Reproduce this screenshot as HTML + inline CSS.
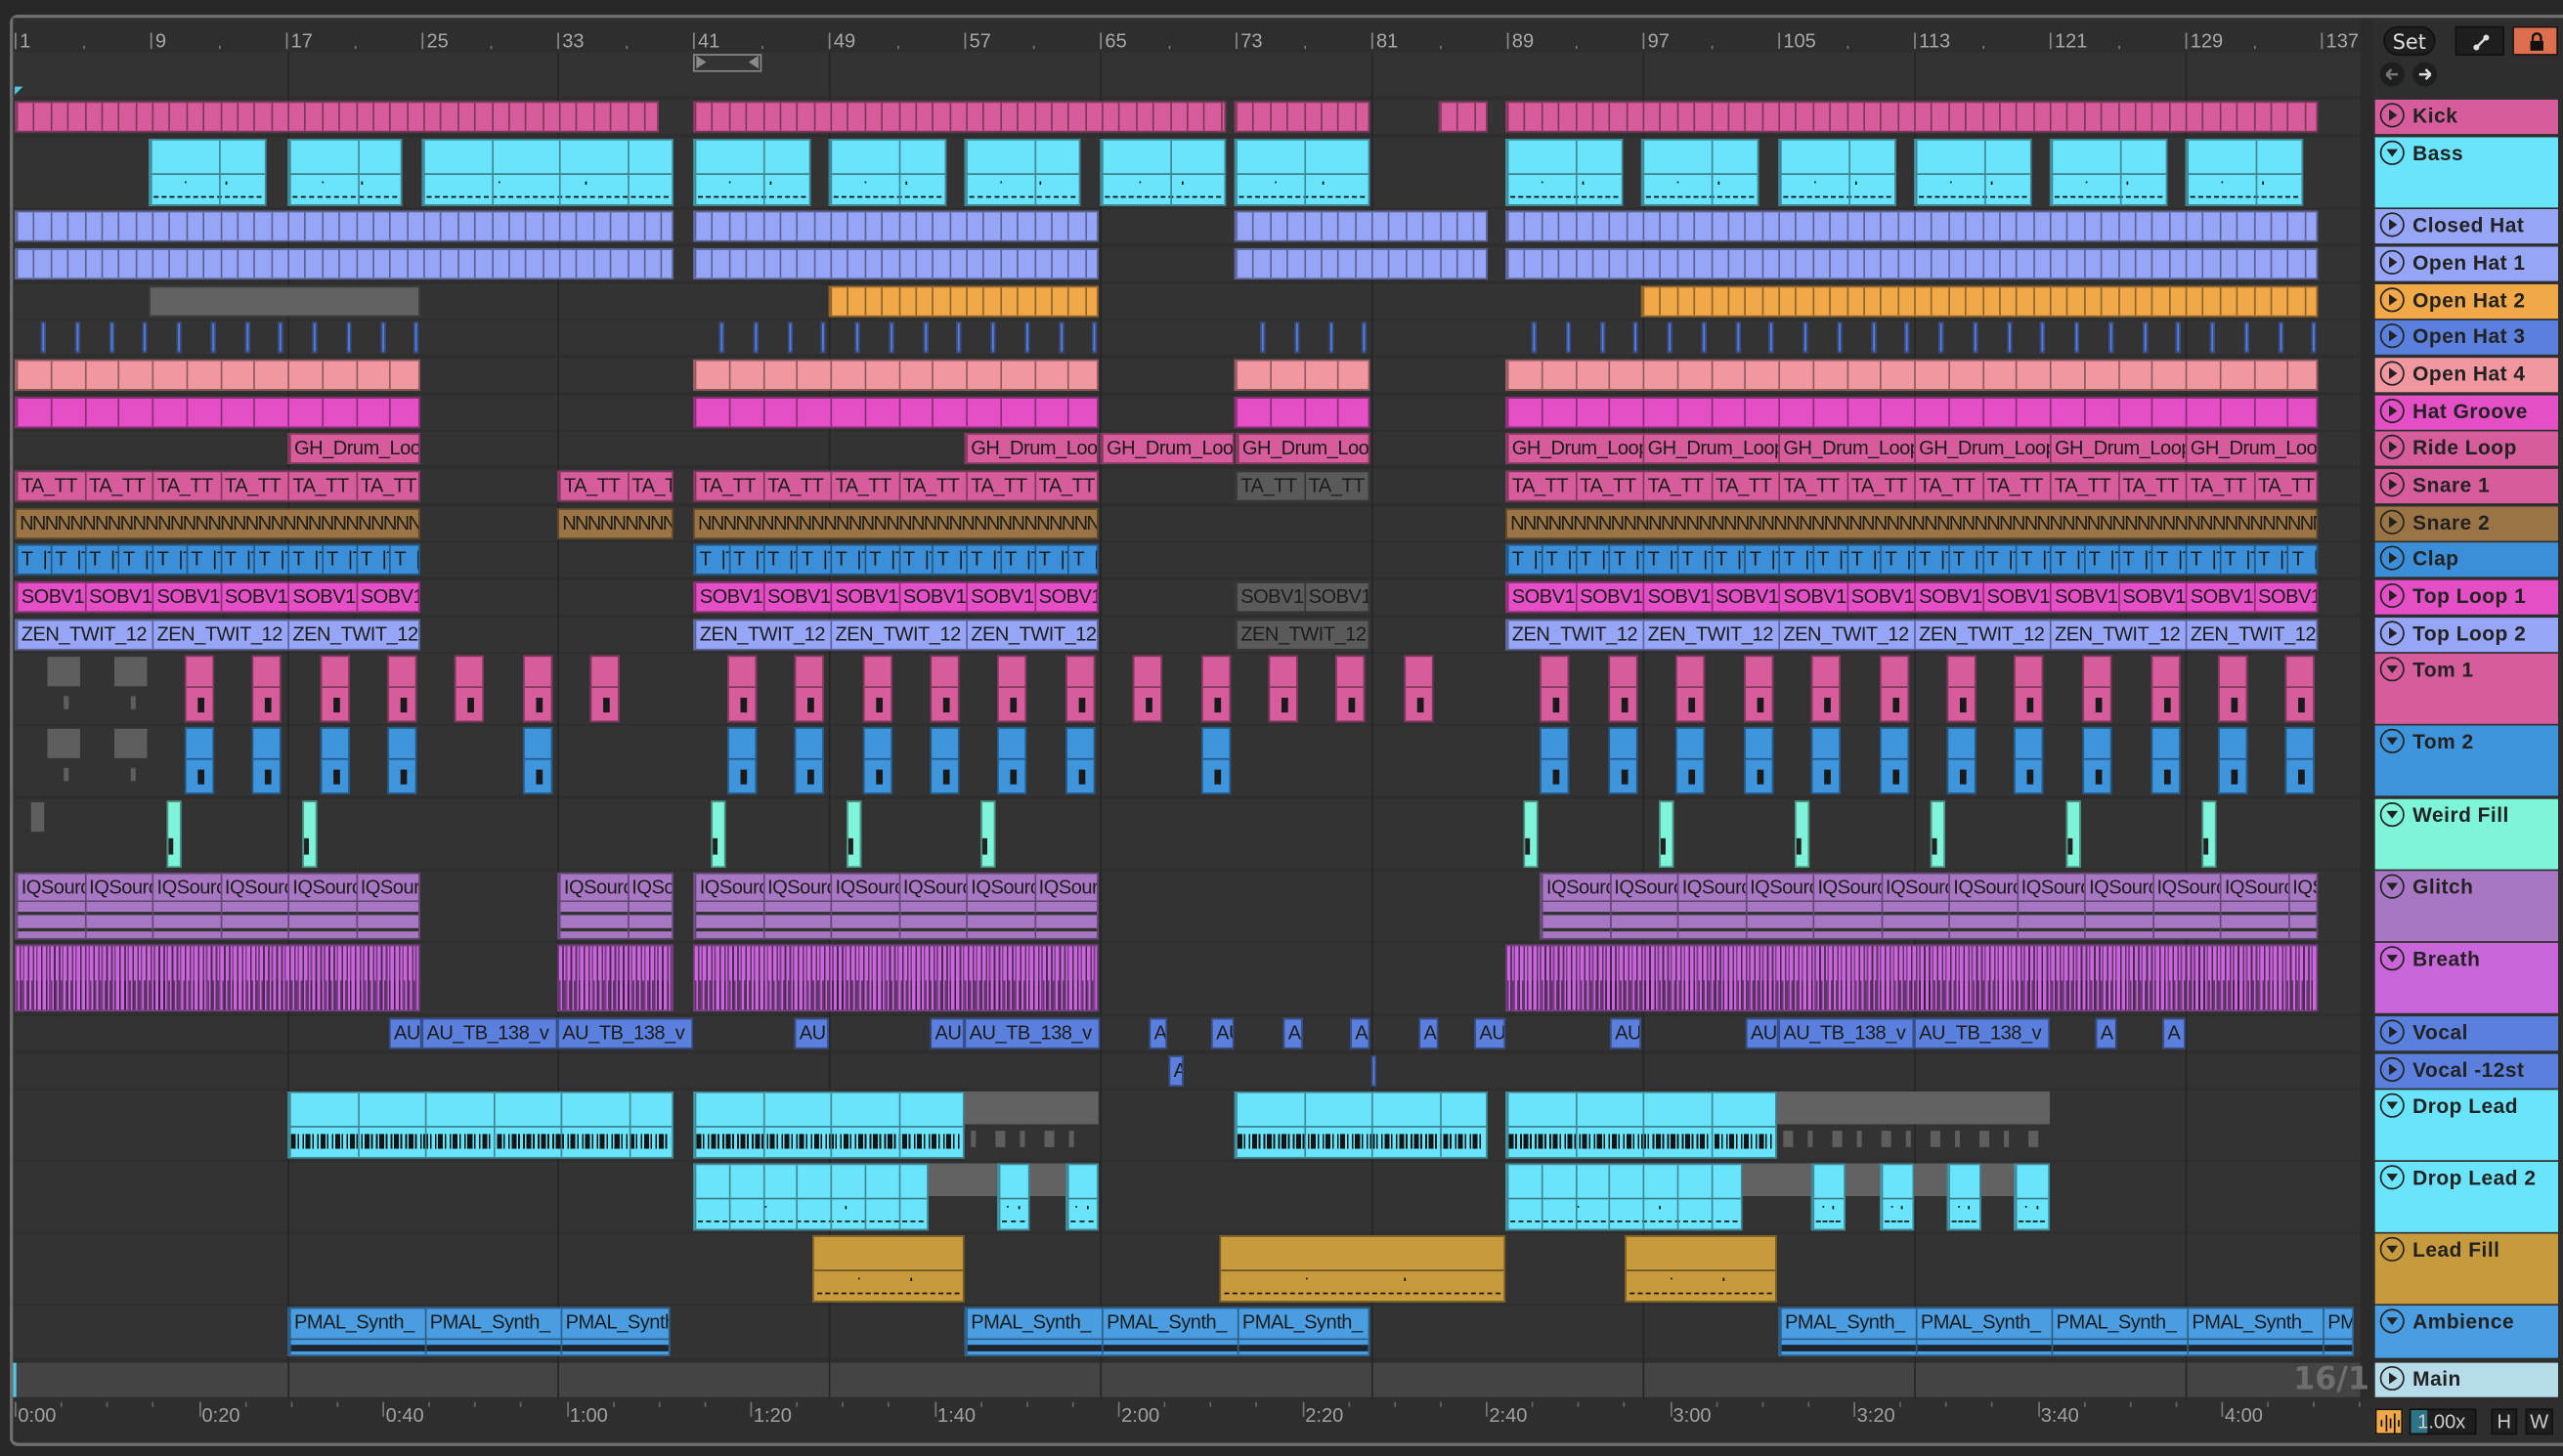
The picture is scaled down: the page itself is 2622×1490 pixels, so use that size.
<!DOCTYPE html>
<html><head><meta charset="utf-8">
<style>
html,body{margin:0;padding:0;background:#282828;overflow:hidden;width:2622px;height:1490px}
#s{position:absolute;left:0;top:0;width:1568px;height:891px;transform:scale(1.672194);transform-origin:0 0;font-family:"Liberation Sans",sans-serif;background:#282828}
.a{position:absolute;box-sizing:border-box}
.frame{left:6px;top:9px;width:1570px;height:876px;border:2px solid #6f6f6f;border-radius:5px;background:#2e2e2e}
.c{position:absolute;box-sizing:border-box;overflow:hidden}
.lbl{position:absolute;left:2px;top:1px;font-size:12px;color:#1c1c1c;white-space:nowrap;line-height:14px;letter-spacing:-0.3px}
.hd{position:absolute;left:1453px;width:112px;box-sizing:border-box;font-size:12px;font-weight:bold;color:#222;font-family:"Liberation Sans",sans-serif}
.hd .ic{position:absolute;left:3px;top:2px;width:15px;height:15px;border:1.3px solid #222;border-radius:50%;box-sizing:border-box}
.hd .tx{position:absolute;left:23px;top:3px;font-size:12.5px;letter-spacing:0.3px}
.rl{position:absolute;font-size:12px;color:#a8a8a8;top:18px}
.tl{position:absolute;font-size:12px;color:#a0a0a0;top:859px}
</style></head><body>
<div id="s">
<div class="a frame"></div>
<div id="g"></div>
</div>
<script>
var S=document.getElementById('g');
function el(st,html,cls){var d=document.createElement('div');d.className=cls||'a';d.style.cssText=st;if(html)d.innerHTML=html;S.appendChild(d);return d;}
el('left:8px;top:11px;width:1436px;height:21px;background:#2e2e2e');
el('left:8px;top:32px;width:1436px;height:27px;background:#333');
var bars=[1,9,17,25,33,41,49,57,65,73,81,89,97,105,113,121,129,137];
bars.forEach(function(b,i){var x=9+(b-1)*10.375;
 el('left:'+(x)+'px;top:20px;width:1px;height:10px;background:#888');
 el('left:'+(x+3)+'px;top:18px;font-size:12px;color:#a8a8a8;','' + b,'rl');
 el('left:'+(x+41.5)+'px;top:28px;width:1px;height:2px;background:#777');
});
el('left:424px;top:33px;width:42px;height:11px;border:1px solid #8a8a8a');
el('left:426px;top:34px;width:0;height:0;border-top:4px solid transparent;border-bottom:4px solid transparent;border-left:6px solid #8a8a8a');
el('left:458px;top:34px;width:0;height:0;border-top:4px solid transparent;border-bottom:4px solid transparent;border-right:6px solid #8a8a8a');
el('left:9px;top:53px;width:0;height:0;border-top:5px solid #4fc9e0;border-right:5px solid transparent');
var T=[
['Kick',61,21,'#d65c9b',0],['Bass',84,43,'#6ae4fb',1],['Closed Hat',128,21,'#97a5f7',0],['Open Hat 1',151,21,'#97a5f7',0],
['Open Hat 2',174,21,'#f0a848',0],['Open Hat 3',196,21,'#5b7fdc',0],['Open Hat 4',219,21,'#f0979f',0],['Hat Groove',242,21,'#e54fc6',0],
['Ride Loop',264,21,'#d65c9b',0],['Snare 1',287,21,'#d65c9b',0],['Snare 2',310,21,'#9a7444',0],['Clap',332,21,'#3b8fd8',0],
['Top Loop 1',355,21,'#e54fc6',0],['Top Loop 2',378,21,'#97a5f7',0],['Tom 1',400,43,'#d65c9b',1],['Tom 2',444,43,'#3e95dc',1],
['Weird Fill',489,43,'#7ef5d9',1],['Glitch',533,43,'#a877c3',1],['Breath',577,43,'#c966d9',1],['Vocal',622,21,'#5b7fdc',0],
['Vocal -12st',645,21,'#5b7fdc',0],['Drop Lead',667,43,'#6ae4fb',1],['Drop Lead 2',711,43,'#6ae4fb',1],['Lead Fill',755,43,'#c89a3e',1],
['Ambience',799,32,'#4a9de0',1],['Main',834,21,'#b5dce8',0]];
T.forEach(function(t,i){
 var bg=i==25?'#444':'#333';
 el('left:8px;top:'+t[1]+'px;width:1436px;height:'+t[2]+'px;background:'+bg);
 var h=el('top:'+t[1]+'px;height:'+t[2]+'px;background:'+t[3],'','hd');
 var icon=t[4]?'<svg width="13" height="13" viewBox="0 0 13 13" style="position:absolute;left:0;top:0"><path d="M3 4.3 L10 4.3 L6.5 9 Z" fill="#222"/></svg>':'<svg width="13" height="13" viewBox="0 0 13 13" style="position:absolute;left:0;top:0"><path d="M4.6 3 L9.6 6.5 L4.6 10 Z" fill="#222"/></svg>';
 h.innerHTML='<div class="ic">'+icon+'</div><div class="tx">'+t[0]+'</div>';
});
[176,341,507,673,839,1005,1171,1337].forEach(function(x){el('left:'+x+'px;top:32px;width:1px;height:824px;background:#262626');});
el('left:1444px;top:11px;width:8px;height:845px;background:#2b2b2b');
function dk(c,f){var n=parseInt(c.slice(1),16),r=(n>>16)*f|0,g=((n>>8)&255)*f|0,b=(n&255)*f|0;return 'rgb('+r+','+g+','+b+')';}
function clip(ti,x1,x2,col,div,label,kind){
 var t=T[ti];var y=t[1]+1,h=t[2]-2;
 var c=el('left:'+x1+'px;top:'+y+'px;width:'+(x2-x1)+'px;height:'+h+'px;background:'+col+';border:1px solid '+dk(col,0.6),'','c');
 if(kind=='midi'){c.innerHTML+='<div class="a" style="left:0;right:0;top:'+(h/2-1)+'px;height:1px;background:'+dk(col,0.55)+'"></div><div class="a" style="left:2px;right:2px;top:'+(h*0.83)+'px;height:1px;border-top:1.2px dashed #111"></div><div class="a" style="left:30%;top:'+(h*0.62)+'px;width:1px;height:1px;background:#111"></div><div class="a" style="left:65%;top:'+(h*0.6)+'px;width:1px;height:2px;background:#111"></div>';}
 if(kind=='bar'){c.innerHTML+='<div class="a" style="left:0;right:0;top:'+(h/2-1)+'px;height:1px;background:'+dk(col,0.55)+'"></div><div class="a" style="left:1px;right:1px;top:'+(h*0.6)+'px;height:'+(h*0.24)+'px;background:repeating-linear-gradient(90deg,#151515 0 3px,'+col+' 3px 4px,#151515 4px 5px,'+col+' 5px 7px,#151515 7px 8px,'+col+' 8px 9px)"></div>';}
 if(kind=='wave'){c.innerHTML+='<div class="a" style="left:0;right:0;top:'+(h*0.38)+'px;height:1px;background:'+dk(col,0.6)+'"></div><div class="a" style="left:0;right:0;top:'+(h*0.56)+'px;height:2px;background:#333"></div><div class="a" style="left:0;right:0;top:'+(h*0.8)+'px;height:2px;background:#333"></div>';}
 if(kind=='amb'){c.innerHTML+='<div class="a" style="left:0;right:0;top:'+(h*0.6)+'px;height:1px;background:'+dk(col,0.6)+'"></div><div class="a" style="left:0;right:0;top:'+(h*0.72)+'px;height:4px;background:#1b2630"></div>';}
 if(kind=='breath'){c.style.background='repeating-linear-gradient(90deg,'+col+' 0 2px,#5a3464 2px 3px,'+col+' 3px 4px,#7a3f88 4px 5px,'+col+' 5px 7px,#4a2a52 7px 8px)';c.innerHTML+='<div class="a" style="left:0;right:0;top:'+(h*0.5)+'px;height:'+(h*0.45)+'px;background:repeating-linear-gradient(90deg,rgba(40,20,45,.6) 0 1px,transparent 1px 3px)"></div>';}
 if(div){for(var x=0;x<x2-x1-0.5;x+=div){var d=document.createElement('div');d.className='a';d.style.cssText='left:'+x+'px;top:0;width:'+div+'px;height:100%;border-left:1px solid '+dk(col,0.6)+';overflow:hidden';if(label)d.innerHTML='<div class="lbl">'+label+'</div>';c.appendChild(d);}}
 else if(label){c.innerHTML+='<div class="lbl">'+label+'</div>';}
 return c;}
var B=10.375;
function R(ti,ranges,col,div,label,kind){ranges.forEach(function(r){clip(ti,r[0],r[1],col,div,label,kind);});}
var A=[[9,257],[424,672],[921,1418]];
R(0,[[9,403],[424,750],[755,838],[880,910],[921,1418]],'#d65c9b',B);
R(1,[[91,163],[176,246],[258,412],[424,496],[507,579],[590,661],[673,750],[755,838],[921,993],[1004,1076],[1088,1160],[1171,1243],[1254,1326],[1337,1409]],'#6ae4fb',B*4,'', 'midi');
R(2,[[9,412],[424,672],[755,910],[921,1418]],'#97a5f7',B);
R(3,[[9,412],[424,672],[755,910],[921,1418]],'#97a5f7',B);
clip(4,91,257,'#626262',0);R(4,[[507,672],[1004,1418]],'#f0a848',B);
[[9,257],[424,672],[755,838],[921,1418]].forEach(function(r){for(var x=r[0]+16;x<r[1];x+=B*2)clip(5,x,x+3,'#5b7fdc',0);});
R(6,[[9,257],[424,672],[755,838],[921,1418]],'#f0979f',B*2);
R(7,[[9,257],[424,672],[755,838],[921,1418]],'#e54fc6',B*2);
R(8,[[176,257],[590,672],[673,755],[756,838],[921,1418]],'#d65c9b',B*8,'GH_Drum_Loop');
R(9,[[9,257],[341,412],[424,672],[921,1418]],'#d65c9b',B*4,'TA_TT');clip(9,755,838,'#5a5a5a',B*4,'TA_TT');
R(10,[[9,257],[341,412],[424,672],[921,1418]],'#9a7444',0,'<span style="letter-spacing:-1px">NNNNNNNNNNNNNNNNNNNNNNNNNNNNNNNNNNNNNNNNNNNNNNNNNNNNNNNNNNNNNNNNNNNNNNNNNNNNNNNNNNNNNN</span>');
R(11,A,'#3b8fd8',B*2,'T&nbsp;&nbsp;|T');
R(12,A,'#e54fc6',B*4,'SOBV1');clip(12,755,838,'#5a5a5a',B*4,'SOBV1');
R(13,A,'#97a5f7',B*8,'ZEN_TWIT_12');clip(13,755,838,'#5a5a5a',B*8,'ZEN_TWIT_12');
function tom(ti,xs,col){xs.forEach(function(x){var c=clip(ti,x,x+18,col,0);c.innerHTML='<div class="a" style="left:7px;top:25px;width:4px;height:9px;background:#1a1a1a"></div><div class="a" style="left:0;right:0;top:18px;height:1px;background:'+dk(col,0.6)+'"></div>';});}
tom(14,[113,154,196,237,278,320,361,445,486,528,569,610,652,693,735,776,817,859,942,984,1025,1067,1108,1150,1191,1232,1274,1316,1357,1398],'#d65c9b');
tom(15,[113,154,196,237,320,445,486,528,569,610,652,735,942,984,1025,1067,1108,1150,1191,1232,1274,1316,1357,1398],'#3e95dc');
[[14],[15]].forEach(function(a){var t=T[a[0]];[29,70].forEach(function(x){el('left:'+x+'px;top:'+(t[1]+2)+'px;width:20px;height:18px;background:#5e5e5e');el('left:'+(x+10)+'px;top:'+(t[1]+26)+'px;width:3px;height:8px;background:#5e5e5e');});});
[102,185,435,518,600,932,1015,1098,1181,1264,1347].forEach(function(x){var c=clip(16,x,x+9,'#7ef5d9',0);c.innerHTML='<div class="a" style="left:0;top:22px;width:3px;height:10px;background:#222"></div>';});
el('left:19px;top:491px;width:8px;height:18px;background:#5e5e5e');
R(17,[[9,257],[341,412],[424,672],[942,1418]],'#a877c3',B*4,'IQSource','wave');
R(18,[[9,257],[341,412],[424,672],[921,1418]],'#c966d9',0,'','breath');
[[238,258,'AU'],[258,341,'AU_TB_138_v'],[341,424,'AU_TB_138_v'],[486,507,'AU'],[569,590,'AU'],[590,673,'AU_TB_138_v'],[703,714,'A'],[741,755,'AU'],[785,797,'A'],[826,838,'A'],[868,880,'A'],[902,921,'AU'],[985,1004,'AU'],[1068,1088,'AU'],[1088,1171,'AU_TB_138_v'],[1171,1254,'AU_TB_138_v'],[1282,1295,'A'],[1323,1337,'A']].forEach(function(v){clip(19,v[0],v[1],'#5b7fdc',0,v[2]);});
clip(20,715,724,'#5b7fdc',0,'A');clip(20,839,842,'#5b7fdc',0);
R(21,[[176,412],[424,590],[755,910],[921,1087]],'#6ae4fb',B*4,'','bar');
[[590,672],[1087,1254]].forEach(function(r){var t=T[21];el('left:'+r[0]+'px;top:'+(t[1]+1)+'px;width:'+(r[1]-r[0])+'px;height:20px;background:#626262');for(var x=r[0]+4;x<r[1]-8;x+=15)el('left:'+x+'px;top:'+(t[1]+25)+'px;width:'+(x%2?6:3)+'px;height:10px;background:#5e5e5e');});
R(22,[[424,568],[610,630],[652,672],[921,1066],[1108,1129],[1150,1171],[1191,1212],[1232,1254]],'#6ae4fb',B*2,'','midi');
[[568,610],[630,652],[1066,1108],[1129,1150],[1171,1191],[1212,1232]].forEach(function(r){el('left:'+r[0]+'px;top:712px;width:'+(r[1]-r[0])+'px;height:20px;background:#626262');});
R(23,[[497,590],[746,921],[994,1087]],'#c89a3e',0,'','midi');
R(24,[[176,410],[590,838],[1088,1440]],'#4a9de0',B*8,'PMAL_Synth_','amb');
el('left:1403px;top:833px;font-size:19px;font-weight:bold;color:#6e6e6e;font-family:"DejaVu Sans",sans-serif','16/1');
el('left:8px;top:834px;width:2px;height:21px;background:#4fc9e0');
el('left:8px;top:856px;width:1444px;height:26px;background:#2e2e2e');
['0:00','0:20','0:40','1:00','1:20','1:40','2:00','2:20','2:40','3:00','3:20','3:40','4:00'].forEach(function(s,i){var x=9+i*112.5;el('left:'+x+'px;top:858px;width:1px;height:9px;background:#777');el('left:'+(x+2)+'px','','tl').textContent=s;for(var k=1;k<4;k++)el('left:'+(x+k*28)+'px;top:858px;width:1px;height:3px;background:#666');});
el('left:1452px;top:11px;width:114px;height:48px;background:#2e2e2e');
el('left:1458px;top:16px;width:32px;height:18px;border-radius:9px;background:#1e1e1e;border:1px solid #111;color:#ddd;font-size:12.5px;text-align:center;line-height:17px;font-family:\"DejaVu Sans\",sans-serif','Set');
el('left:1502px;top:16px;width:30px;height:18px;background:#1e1e1e;border:1px solid #111','<svg width="30" height="18" style="position:absolute;left:0;top:0"><path d="M12 12 L18 6" stroke="#ddd" stroke-width="1.5"/><circle cx="12" cy="12" r="1.8" fill="#ddd"/><circle cx="18" cy="6" r="1.8" fill="#ddd"/></svg>');
el('left:1537px;top:16px;width:28px;height:18px;background:#dd6f4e;border:1px solid #111','<svg width="28" height="18" style="position:absolute;left:0;top:0"><rect x="10" y="8" width="8" height="6" fill="#111"/><path d="M11.5 8 V6 a2.5 2.5 0 0 1 5 0 V8" stroke="#111" stroke-width="1.4" fill="none"/></svg>');
el('left:1456px;top:38px;width:15px;height:15px;border-radius:50%;background:#1e1e1e','<svg width="15" height="15" style="position:absolute;left:0;top:0"><path d="M4 7.5 H11 M4 7.5 L7 4.5 M4 7.5 L7 10.5" stroke="#777" stroke-width="1.5" fill="none"/></svg>');
el('left:1476px;top:38px;width:15px;height:15px;border-radius:50%;background:#1e1e1e','<svg width="15" height="15" style="position:absolute;left:0;top:0"><path d="M4 7.5 H11 M11 7.5 L8 4.5 M11 7.5 L8 10.5" stroke="#ddd" stroke-width="1.5" fill="none"/></svg>');
el('left:1452px;top:856px;width:114px;height:26px;background:#2e2e2e');
el('left:1453px;top:862px;width:17px;height:16px;background:#f0a848;border:1px solid #111','<svg width="17" height="16" style="position:absolute;left:0;top:0"><path d="M3 6v4M6 3v10M8.5 5v6M11 2v12M13.5 6v4" stroke="#111" stroke-width="1"/></svg>');
el('left:1474px;top:862px;width:41px;height:16px;background:#1e1e1e;border:1px solid #111;color:#ccc;font-size:12px;line-height:15px','<div class="a" style="left:0;top:0;width:10px;height:14px;background:#2f7387"></div><span style="position:relative;left:4px">1.00x</span>');
el('left:1524px;top:862px;width:16px;height:16px;background:#1e1e1e;border:1px solid #111;color:#ccc;font-size:12px;text-align:center;line-height:15px','H');
el('left:1545px;top:862px;width:17px;height:16px;background:#1e1e1e;border:1px solid #111;color:#ccc;font-size:12px;text-align:center;line-height:15px','W');
</script>
</body></html>
